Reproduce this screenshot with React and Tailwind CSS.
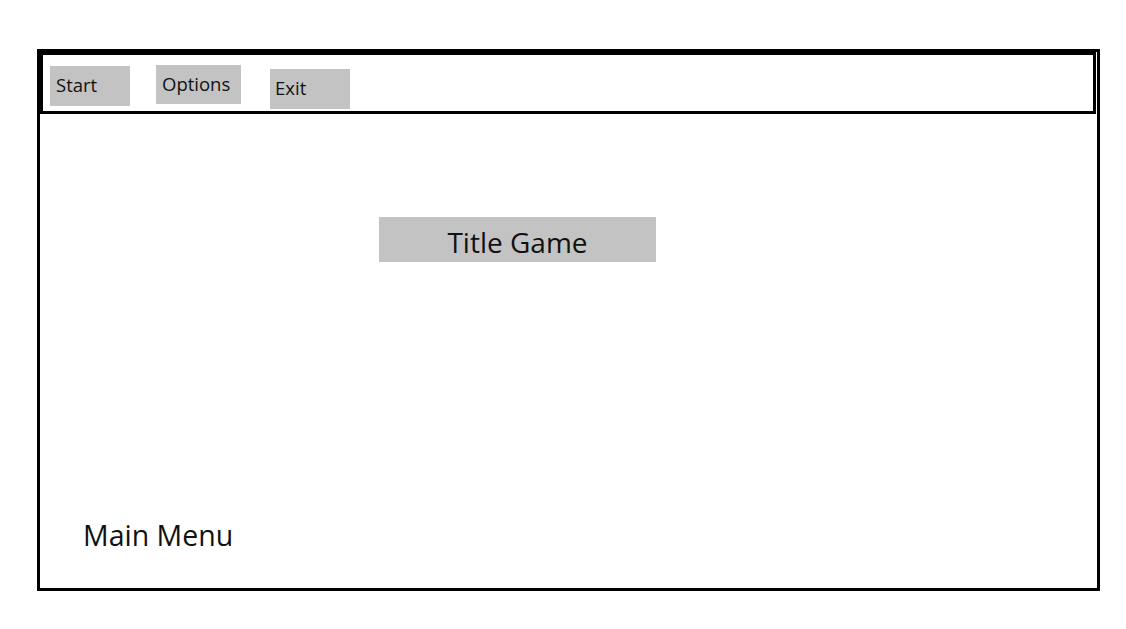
import React from 'react';

const menuItems = [
    { label: 'Start', box: 'ml-[7px] mt-[11px] w-[80px] h-[40px] pl-[6px] pt-[5px]' },
    { label: 'Options', box: 'ml-[26px] mt-[10px] w-[85px] h-[39px] pl-[6px] pt-[5px]' },
    { label: 'Exit', box: 'ml-[29px] mt-[14px] w-[80px] h-[40px] pl-[5px] pt-[5px]' },
];

const App = () => {
    return (
        <div className="min-h-screen bg-white pt-[49px] pl-[37px] font-['Open_Sans',sans-serif] text-[#111]">
            <div className="w-[1063px] h-[542px] border-[3px] border-black flex flex-col">
                {/* Top menu bar */}
                <div className="h-[62px] mr-[1px] border-[3px] border-black flex items-start">
                    {menuItems.map(item => (
                        <div key={item.label} className={`bg-[#c3c3c3] text-[18.5px] leading-normal ${item.box}`}>
                            {item.label}
                        </div>
                    ))}
                </div>

                <div className="flex flex-col items-start">
                    <div className="ml-[339px] mt-[103px] w-[277px] h-[45px] bg-[#c3c3c3] flex justify-center pt-[4px] text-[28px] leading-normal">
                        Title Game
                    </div>
                    <div className="ml-[43px] mt-[252px] text-[28.5px] leading-normal">
                        Main Menu
                    </div>
                </div>
            </div>
        </div>
    );
};

export default App;
